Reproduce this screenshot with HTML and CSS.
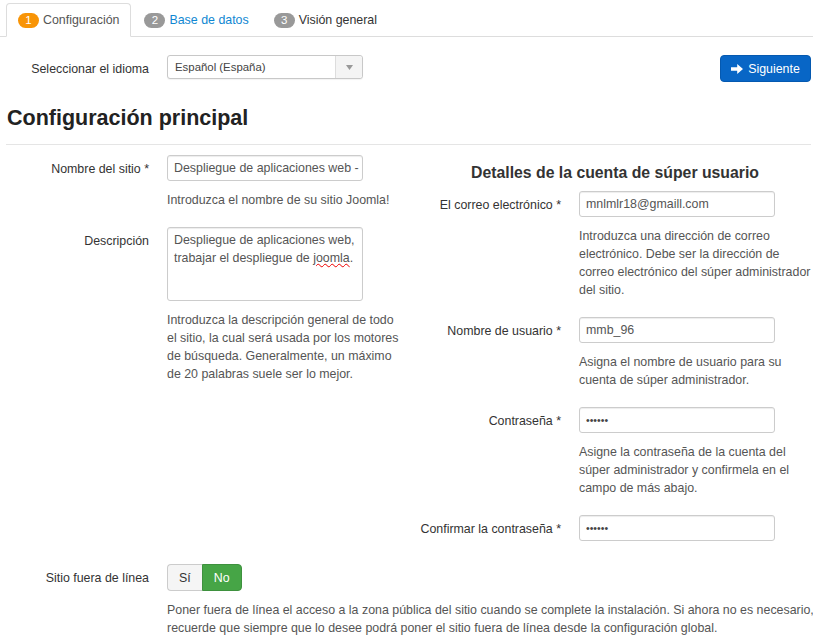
FILE: index.html
```html
<!DOCTYPE html>
<html lang="es">
<head>
<meta charset="utf-8">
<title>Instalación de Joomla</title>
<link rel="stylesheet" href="styles.css">
</head>
<body>
<ul class="tabs">
  <li class="tab active"><span class="badge badge-orange">1</span>Configuración</li>
  <li class="tab"><span class="badge">2</span><a href="#" class="tab-link">Base de datos</a></li>
  <li class="tab"><span class="badge">3</span>Visión general</li>
</ul>
<div class="page">
  <div class="lang-row">
    <label class="label">Seleccionar el idioma</label>
    <div class="select">
      <span class="select-text">Español (España)</span>
      <span class="select-arrow"><svg width="7" height="5" viewBox="0 0 7 5"><path d="M0 0h7L3.5 5z" fill="#999"/></svg></span>
    </div>
    <button class="btn-primary" type="button"><svg class="btn-icon" width="12" height="10" viewBox="0 0 12 10"><path d="M0 3.2h6.2V0L12 5 6.2 10V6.8H0z" fill="#fff"/></svg>Siguiente</button>
  </div>
  <h3 class="title">Configuración principal</h3>
  <hr class="divider">
  <div class="cols">
    <div class="col">
      <div class="field">
        <label class="label">Nombre del sitio *</label>
        <div class="controls">
          <input class="input input-tight" type="text" value="Despliegue de aplicaciones web - Joomla">
          <p class="help">Introduzca el nombre de su sitio Joomla!</p>
        </div>
      </div>
      <div class="field">
        <label class="label">Descripción</label>
        <div class="controls">
          <div class="textarea" role="textbox">Despliegue de aplicaciones web, trabajar el despliegue de <span class="misspelled">joomla</span>.</div>
          <p class="help">Introduzca la descripción general de todo el sitio, la cual será usada por los motores de búsqueda. Generalmente, un máximo de 20 palabras suele ser lo mejor.</p>
        </div>
      </div>
    </div>
    <div class="col">
      <h4 class="subtitle">Detalles de la cuenta de súper usuario</h4>
      <div class="field">
        <label class="label">El correo electrónico *</label>
        <div class="controls">
          <input class="input" type="text" value="mnlmlr18@gmaill.com">
          <p class="help">Introduzca una dirección de correo electrónico. Debe ser la dirección de correo electrónico del súper administrador del sitio.</p>
        </div>
      </div>
      <div class="field">
        <label class="label">Nombre de usuario *</label>
        <div class="controls">
          <input class="input" type="text" value="mmb_96">
          <p class="help">Asigna el nombre de usuario para su cuenta de súper administrador.</p>
        </div>
      </div>
      <div class="field">
        <label class="label">Contraseña *</label>
        <div class="controls">
          <input class="input pass" type="password" value="secret">
          <p class="help">Asigne la contraseña de la cuenta del súper administrador y confirmela en el campo de más abajo.</p>
        </div>
      </div>
      <div class="field">
        <label class="label">Confirmar la contraseña *</label>
        <div class="controls">
          <input class="input pass" type="password" value="secret">
        </div>
      </div>
    </div>
  </div>
  <div class="field offline">
    <label class="label">Sitio fuera de línea</label>
    <div class="controls">
      <div class="toggle">
        <span class="toggle-btn">Sí</span><span class="toggle-btn on">No</span>
      </div>
      <p class="help help-wide">Poner fuera de línea el acceso a la zona pública del sitio cuando se complete la instalación. Si ahora no es necesario, recuerde que siempre que lo desee podrá poner el sitio fuera de línea desde la configuración global.</p>
    </div>
  </div>
</div>
</body>
</html>
```
FILE: styles.css
```css
* { box-sizing: border-box; }
html, body { margin: 0; background: #fff; }
body {
  font-family: "Liberation Sans", Arial, sans-serif;
  font-size: 12.4px;
  line-height: 18px;
  color: #333;
  overflow: hidden;
}
.tabs {
  list-style: none;
  margin: 0;
  padding: 3px 0 0 6px;
  display: flex;
  border-bottom: 1px solid #ddd;
}
.tab {
  height: 34px;
  margin: 0 1px -1px 0;
  padding: 0 11px;
  display: flex;
  align-items: center;
  gap: 4px;
  border: 1px solid transparent;
  border-radius: 4px 4px 0 0;
  color: #333;
}
.tab.active {
  border-color: #ddd #ddd transparent;
  background: #fff;
  color: #555;
}
.tab-link { color: #0f87d2; text-decoration: none; }
.badge {
  display: inline-flex;
  align-items: center;
  justify-content: center;
  width: 21px;
  height: 15px;
  border-radius: 8px;
  background: #999;
  color: #fff;
  font-size: 11.5px;
  line-height: 15px;
}
.badge-orange { background: #f89406; }
.page { padding: 0 2px 0 7px; }
.lang-row {
  display: flex;
  align-items: flex-start;
  margin-top: 18px;
  height: 50px;
}
.label {
  width: 142px;
  flex: none;
  text-align: right;
  padding-top: 5px;
  margin-right: 18px;
  color: #333;
}
.select {
  width: 196px;
  height: 24px;
  border: 1px solid #c8c8c8;
  border-radius: 3px;
  display: flex;
  align-items: center;
  background: #fff;
  box-shadow: 0 1px 1px rgba(0,0,0,0.05);
}
.select-text { flex: 1; padding-left: 7px; font-size: 11.4px; color: #444; }
.select-arrow {
  width: 27px;
  height: 100%;
  border-left: 1px solid #ddd;
  background: #f4f4f4;
  display: flex;
  align-items: center;
  justify-content: center;
  border-radius: 0 3px 3px 0;
}
.btn-primary {
  margin-left: auto;
  width: 91px;
  height: 27px;
  border: 1px solid #0559b0;
  border-radius: 4px;
  background: #0866c6;
  color: #fff;
  font: inherit;
  display: flex;
  align-items: center;
  justify-content: center;
  gap: 5px;
  padding: 0;
}
.title {
  margin: 0;
  font-size: 21.5px;
  line-height: 26px;
  font-weight: bold;
  color: #222;
}
.divider {
  border: 0;
  border-top: 1px solid #e5e5e5;
  margin: 13px 0 10px -1px;
}
.cols {
  display: grid;
  grid-template-columns: 1fr 1fr;
  column-gap: 20px;
}
.field { display: flex; align-items: flex-start; margin-bottom: 18px; }
.controls { flex: 1; min-width: 0; }
.input {
  display: block;
  width: 196px;
  height: 26px;
  border: 1px solid #ccc;
  border-radius: 3px;
  padding: 3px 6px;
  font: inherit;
  color: #555;
  background: #fff;
  box-shadow: inset 0 1px 1px rgba(0,0,0,0.075);
}
.input-tight { padding-right: 1px; }
.input.pass { font-size: 10.5px; color: #444; }
.textarea {
  width: 196px;
  height: 74px;
  border: 1px solid #ccc;
  border-radius: 3px;
  padding: 3px 6px;
  color: #555;
  box-shadow: inset 0 1px 1px rgba(0,0,0,0.075);
}
.misspelled { text-decoration: underline wavy #e00; text-decoration-thickness: 1px; text-underline-offset: 1px; }
.help { margin: 10px 0 0; color: #555; }
.help-wide { margin-right: -4px; }
.subtitle {
  margin: 7px 0 7px;
  font-size: 15.8px;
  line-height: 22px;
  font-weight: bold;
  text-align: center;
  color: #333;
}
.offline { margin-top: 5px; }
.toggle { display: flex; }
.toggle-btn {
  height: 27px;
  padding: 0 11px;
  display: flex;
  align-items: center;
  border: 1px solid #ccc;
  background: #f5f5f5;
  color: #333;
}
.toggle-btn:first-child { border-radius: 4px 0 0 4px; border-right: 0; }
.toggle-btn.on { background: #46a546; border-color: #3e913e; color: #fff; border-radius: 0 4px 4px 0; }
```
